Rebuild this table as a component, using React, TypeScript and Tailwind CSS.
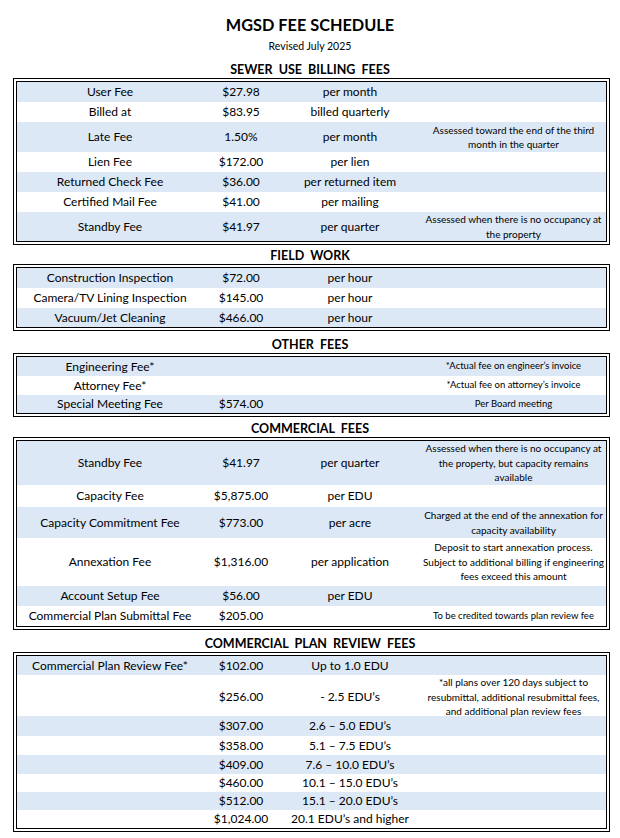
import React from "react";

type Row = {
  label?: string;
  amount?: string;
  unit?: string;
  note?: React.ReactNode;
  h: number;
  noteSmall?: boolean;
};

const BLUE = "bg-[#dce8f6]";

function Table({ rows }: { rows: Row[] }) {
  return (
    <div className="ml-[13px] w-[597px] border border-black p-[2px]">
      <div className="border border-black">
        {rows.map((r, i) => (
          <div
            key={i}
            className={`grid grid-cols-[186px_76px_142px_1fr] items-center text-center ${
              i % 2 === 0 ? BLUE : "bg-white"
            }`}
            style={{ height: r.h }}
          >
            <div className="text-[12px] leading-[14px]">{r.label}</div>
            <div className="text-[12px] leading-[14px]">{r.amount}</div>
            <div className="text-[12px] leading-[14px]">{r.unit}</div>
            <div
              className={`${
                r.noteSmall ? "text-[9.5px]" : "text-[10px]"
              } leading-[14.5px] whitespace-nowrap`}
            >
              {r.note}
            </div>
          </div>
        ))}
      </div>
    </div>
  );
}

function Heading({ children, mt }: { children: string; mt: string }) {
  return (
    <div
      className={`${mt} mb-0 text-center text-[12.5px] font-bold leading-[16px] whitespace-pre`}
    >
      {children}
    </div>
  );
}

export default function App() {
  return (
    <div
      className="w-[620px] h-[838px] bg-white text-black overflow-hidden"
      style={{ fontFamily: "Lato, 'Open Sans', sans-serif" }}
    >
      <div className="pt-[15px] text-center text-[16.3px] font-bold leading-[20px]">
        MGSD FEE SCHEDULE
      </div>
      <div className="mt-[4px] text-center text-[10.5px] leading-[14px]">
        Revised July 2025
      </div>

      <Heading mt="mt-[9px]">{"SEWER  USE  BILLING  FEES"}</Heading>
      <Table
        rows={[
          { label: "User Fee", amount: "$27.98", unit: "per month", h: 20 },
          { label: "Billed at", amount: "$83.95", unit: "billed quarterly", h: 20 },
          {
            label: "Late Fee",
            amount: "1.50%",
            unit: "per month",
            h: 30,
            note: (
              <>
                Assessed toward the end of the third
                <br />
                month in the quarter
              </>
            ),
          },
          { label: "Lien Fee", amount: "$172.00", unit: "per lien", h: 20 },
          { label: "Returned Check Fee", amount: "$36.00", unit: "per returned item", h: 20 },
          { label: "Certified Mail Fee", amount: "$41.00", unit: "per mailing", h: 20 },
          {
            label: "Standby Fee",
            amount: "$41.97",
            unit: "per quarter",
            h: 29,
            note: (
              <>
                Assessed when there is no occupancy at
                <br />
                the property
              </>
            ),
          },
        ]}
      />

      <Heading mt="mt-[3px]">{"FIELD  WORK"}</Heading>
      <Table
        rows={[
          { label: "Construction Inspection", amount: "$72.00", unit: "per hour", h: 20 },
          { label: "Camera/TV Lining Inspection", amount: "$145.00", unit: "per hour", h: 20 },
          { label: "Vacuum/Jet Cleaning", amount: "$466.00", unit: "per hour", h: 19 },
        ]}
      />

      <Heading mt="mt-[6px]">{"OTHER  FEES"}</Heading>
      <Table
        rows={[
          {
            label: "Engineering Fee*",
            h: 19,
            noteSmall: true,
            note: "*Actual fee on engineer\u2019s invoice",
          },
          {
            label: "Attorney Fee*",
            h: 19,
            noteSmall: true,
            note: "*Actual fee on attorney\u2019s invoice",
          },
          {
            label: "Special Meeting Fee",
            amount: "$574.00",
            h: 18,
            noteSmall: true,
            note: "Per Board meeting",
          },
        ]}
      />

      <Heading mt="mt-[4px]">{"COMMERCIAL  FEES"}</Heading>
      <Table
        rows={[
          {
            label: "Standby Fee",
            amount: "$41.97",
            unit: "per quarter",
            h: 44,
            note: (
              <>
                Assessed when there is no occupancy at
                <br />
                the property, but capacity remains
                <br />
                available
              </>
            ),
          },
          { label: "Capacity Fee", amount: "$5,875.00", unit: "per EDU", h: 22 },
          {
            label: "Capacity Commitment Fee",
            amount: "$773.00",
            unit: "per acre",
            h: 31,
            note: (
              <>
                Charged at the end of the annexation for
                <br />
                capacity availability
              </>
            ),
          },
          {
            label: "Annexation Fee",
            amount: "$1,316.00",
            unit: "per application",
            h: 48,
            note: (
              <>
                Deposit to start annexation process.
                <br />
                Subject to additional billing if engineering
                <br />
                fees exceed this amount
              </>
            ),
          },
          { label: "Account Setup Fee", amount: "$56.00", unit: "per EDU", h: 20 },
          {
            label: "Commercial Plan Submittal Fee",
            amount: "$205.00",
            h: 20,
            noteSmall: true,
            note: "To be credited towards plan review fee",
          },
        ]}
      />

      <Heading mt="mt-[6px]">{"COMMERCIAL  PLAN  REVIEW  FEES"}</Heading>
      <Table
        rows={[
          {
            label: "Commercial Plan Review Fee*",
            amount: "$102.00",
            unit: "Up to 1.0 EDU",
            h: 19,
          },
          {
            amount: "$256.00",
            unit: "- 2.5 EDU\u2019s",
            h: 41,
            note: (
              <>
                *all plans over 120 days subject to
                <br />
                resubmittal, additional resubmittal fees,
                <br />
                and additional plan review fees
              </>
            ),
          },
          { amount: "$307.00", unit: "2.6 \u2013 5.0 EDU\u2019s", h: 20 },
          { amount: "$358.00", unit: "5.1 \u2013 7.5 EDU\u2019s", h: 19 },
          { amount: "$409.00", unit: "7.6 \u2013 10.0 EDU\u2019s", h: 19 },
          { amount: "$460.00", unit: "10.1 \u2013 15.0 EDU\u2019s", h: 18 },
          { amount: "$512.00", unit: "15.1 \u2013 20.0 EDU\u2019s", h: 18 },
          { amount: "$1,024.00", unit: "20.1 EDU\u2019s and higher", h: 18 },
        ]}
      />
    </div>
  );
}
